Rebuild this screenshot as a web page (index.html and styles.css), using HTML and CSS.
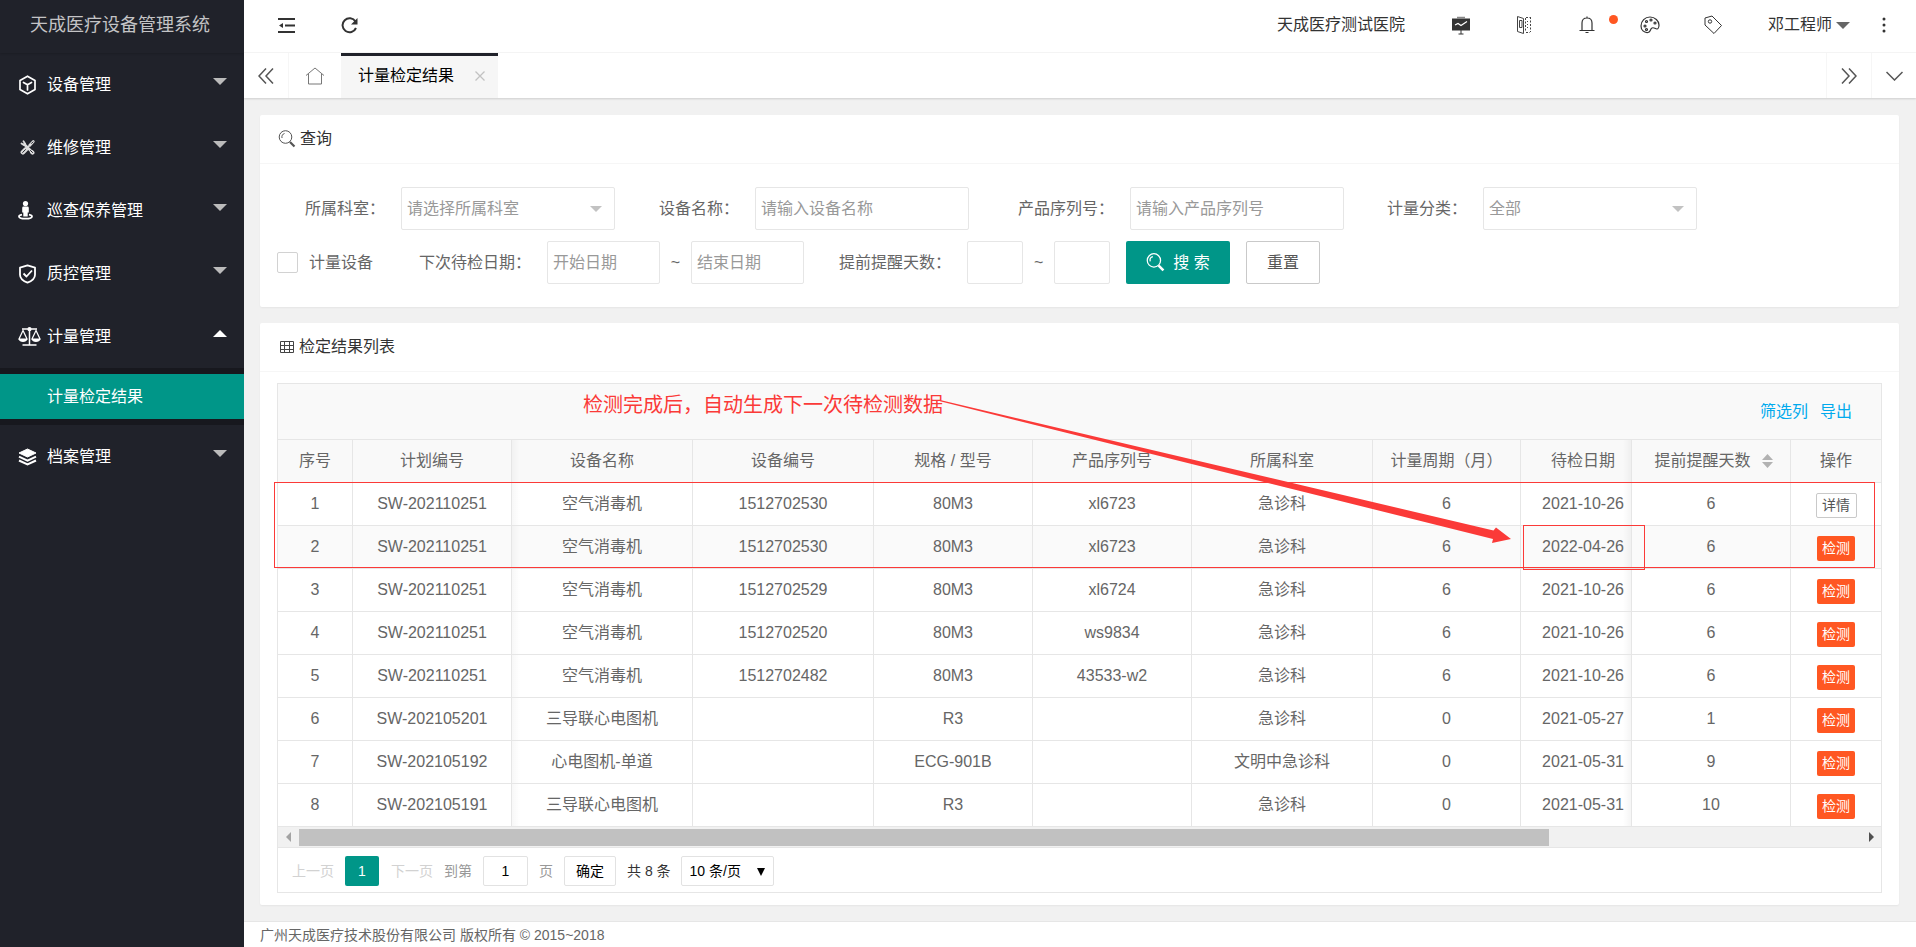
FILE: index.html
```html
<!DOCTYPE html>
<html lang="zh-CN">
<head>
<meta charset="utf-8">
<title>天成医疗设备管理系统</title>
<link rel="stylesheet" href="styles.css">
</head>
<body>
<div class="app">
  <aside class="side">
    <div class="logo">天成医疗设备管理系统</div>
    <nav class="menu">
      <a class="menu-item" href="#"><span class="menu-icon"><svg width="19" height="20" viewBox="0 0 19 20" fill="none" stroke="currentColor" stroke-width="1.700" stroke-linejoin="round"><path d="M9.500 1.200 17 5.500v9L9.500 18.800 2 14.500v-9z"/><path d="M5.500 7.500l4 2.300 4-2.300M9.500 9.800V15" stroke-linecap="round"/></svg></span>设备管理<i class="caret"></i></a>
      <a class="menu-item" href="#"><span class="menu-icon indent"><svg width="15" height="15" viewBox="0 0 15 15" fill="none" stroke="#ddd" stroke-linecap="round"><path d="M4.500 4.500l8 8" stroke-width="2.600"/><path d="M1.500 3.500l2 1.300 1.500-1.300L3.500 1.300" stroke-width="1.800"/><path d="M13.200 1.600L9.800 5.200" stroke-width="2.800"/><path d="M5.800 9.400L2.800 12.300" stroke-width="4.500"/><path d="M9 6L7 8" stroke-width="1.500"/><path d="M12 12.200l.5.500" stroke-width="4"/><path d="M2.600 12.500l2.800-2.800M10.500 10.500l2 2M11.500 3.400l1.500-1.500" stroke="#20222a" stroke-width="1"/></svg></span>维修管理<i class="caret"></i></a>
      <a class="menu-item" href="#"><span class="menu-icon"><svg width="16" height="19" viewBox="0 0 16 19" fill="currentColor"><circle cx="7.500" cy="2.600" r="2.600"/><path d="M5.600 5.600h3.800q1.400 0 1.400 1.400v4.600H9.700v4H5.300v-4H4.200V7q0-1.400 1.400-1.400z"/><path d="M4 13.700c-2 .4-3 1-3 1.800 0 1.300 3 2.200 6.500 2.200s6.500-.9 6.500-2.200c0-.8-1-1.400-3-1.800" fill="none" stroke="currentColor" stroke-width="1.800"/></svg></span>巡查保养管理<i class="caret"></i></a>
      <a class="menu-item" href="#"><span class="menu-icon"><svg width="19" height="20" viewBox="0 0 19 20" fill="none" stroke="currentColor" stroke-width="1.800" stroke-linejoin="round"><path d="M9.500 1.300 17 3.700v7c0 4-4 6.600-7.500 8C6 17.300 2 14.700 2 10.700v-7z"/><path d="M5.500 9.500l3 3 5.500-6"/></svg></span>质控管理<i class="caret"></i></a>
      <a class="menu-item open" href="#"><span class="menu-icon"><svg width="23" height="20" viewBox="0 0 23 20" fill="none" stroke="currentColor" stroke-width="1.200"><path d="M4 2h15M11.500 2v16M4.500 18h14" stroke-width="1.500"/><circle cx="11.500" cy="2.200" r="1.500" fill="currentColor"/><path d="M5 3.500L1 12h8zM18 3.500L14 12h8z"/><path d="M.6 12h8.800c-.4 4-8.400 4-8.800 0zM13.600 12h8.800c-.4 4-8.400 4-8.800 0z" fill="currentColor" stroke="none"/></svg></span>计量管理<i class="caret"></i></a>
      <div class="submenu"><a class="submenu-item" href="#">计量检定结果</a></div>
      <a class="menu-item" href="#"><span class="menu-icon"><svg width="19" height="18" viewBox="0 0 19 18" fill="none" stroke="currentColor" stroke-width="2"><path d="M9.500 1 18 5 9.500 9 1 5z" fill="currentColor" stroke-width="1"/><path d="M1 8.700l8.500 4 8.500-4M1 12.500l8.500 4 8.500-4"/></svg></span>档案管理<i class="caret"></i></a>
    </nav>
  </aside>

  <div class="page">
    <header class="top">
      <button class="tool-btn" type="button" aria-label="收起菜单"><svg width="17" height="17" viewBox="0 0 17 17" fill="none" stroke="#333" stroke-width="2"><path d="M0 2h17M7 8.500h10M0 15h17"/><path d="M5 6v5L1 8.500z" fill="#333" stroke="none"/></svg></button>
      <button class="tool-btn" type="button" aria-label="刷新"><svg width="17" height="17" viewBox="0 0 17 17" fill="none" stroke="#333" stroke-width="2"><path d="M14.500 4.500A7 7 0 1 0 15 11"/><path d="M16.500 1v6.500H10z" fill="#333" stroke="none"/></svg></button>
      <span class="hospital">天成医疗测试医院</span>
      <div class="top-icons">
        <a class="top-icon" href="#" aria-label="大屏"><svg width="20" height="20" viewBox="0 0 20 20" fill="none" stroke="#333"><path d="M6 2.500h8" stroke="#888" stroke-width="1.500"/><path d="M1 3.500h18v12H1z" fill="#333" stroke="none"/><path d="M4 10l3-1.500 3 2 6-4" stroke="#fff" stroke-width="1.200"/><path d="M10 15v4M7.500 19h5"/></svg></a>
        <a class="top-icon" href="#" aria-label="手册"><svg width="16" height="20" viewBox="0 0 16 20" fill="none" stroke="#444"><path d="M1.500 1.500l6 2v15l-6-2z"/><path d="M3.500 5.500h2.500v7h-2.500z"/><path d="M9.500 3v14M14.500 2v15M10 2.500h4M10 17.500h4" stroke-dasharray="2 1.500"/><path d="M11.500 6v8" stroke-dasharray="1 2"/></svg></a>
        <a class="top-icon" href="#" aria-label="消息"><svg width="16" height="18" viewBox="0 0 16 18" fill="none" stroke="#333" stroke-width="1.200"><path d="M3 14V7c0-3 2-5 5-5s5 2 5 5v7M.5 14.500h15M6.500 16.500h3M8 .5v1.500"/></svg><i class="dot"></i></a>
        <a class="top-icon" href="#" aria-label="主题"><svg width="20" height="18" viewBox="0 0 20 18" fill="none" stroke="#333" stroke-width="1.200"><path d="M8 16.500C4 17 1 14 1 10c0-5 4-9 9-9s9 4 9 8c0 2-1 4-2 4-2 0-3-2-5-1s-1 4-4 4.500z"/><circle cx="5" cy="10" r="1"/><circle cx="6.500" cy="5.500" r="1"/><circle cx="11" cy="4" r="1"/><circle cx="15" cy="7" r="1"/><circle cx="6.500" cy="13.500" r="1"/></svg></a>
        <a class="top-icon" href="#" aria-label="便签"><svg width="20" height="20" viewBox="0 0 20 20" fill="none" stroke="#333" stroke-linejoin="round"><path d="M2 3l7-2 9.500 9.500-7.500 8L2 10z"/><circle cx="7" cy="6.500" r="1.700"/></svg></a>
      </div>
      <a class="user" href="#">邓工程师<i class="caret dark"></i></a>
      <button class="more" type="button" aria-label="更多"><svg width="4" height="16" viewBox="0 0 4 16" fill="#333"><circle cx="2" cy="2" r="1.500"/><circle cx="2" cy="8" r="1.500"/><circle cx="2" cy="14" r="1.500"/></svg></button>
    </header>

    <div class="tabs">
      <button class="tab-ctl left" type="button" aria-label="向左"><svg width="16" height="16" viewBox="0 0 16 16" fill="none" stroke="#555" stroke-width="1.500"><path d="M8 .5L1 8l7 7.500M15 .5L8 8l7 7.500"/></svg></button>
      <a class="tab-home" href="#" aria-label="主页"><svg width="20" height="18" viewBox="0 0 20 18" fill="none" stroke="#777"><path d="M1 8.500L10 1l9 7.500M3.500 7v10h13V7"/></svg></a>
      <div class="tab active"><a href="#">计量检定结果</a><button class="tab-close" type="button" aria-label="关闭"><svg width="10" height="10" viewBox="0 0 10 10" stroke="#c2c2c2" stroke-width="1.300"><path d="M.5.5l9 9M9.500.5l-9 9"/></svg></button></div>
      <button class="tab-ctl push" type="button" aria-label="向右"><svg width="16" height="16" viewBox="0 0 16 16" fill="none" stroke="#555" stroke-width="1.500"><path d="M1 .5L8 8l-7 7.500M8 .5L15 8l-7 7.500"/></svg></button>
      <button class="tab-ctl" type="button" aria-label="展开"><svg width="17" height="10" viewBox="0 0 17 10" fill="none" stroke="#555" stroke-width="1.500"><path d="M.5 1l8 8 8-8"/></svg></button>
    </div>

    <main class="content">
      <section class="card">
        <h2 class="card-head"><svg width="18" height="18" viewBox="0 0 18 18" fill="none" stroke="#555"><circle cx="7.500" cy="7" r="6.300"/><path d="M4 8c-.5-2 .5-4 2.500-4.500"/><path d="M12 12l4.500 4.500" stroke-width="2.200"/></svg>查询</h2>
        <form class="search">
          <div class="row-a">
            <div class="field"><label for="dept">所属科室：</label><span class="pick"><select id="dept" class="ctl"><option>请选择所属科室</option></select></span></div>
            <div class="field"><label for="name">设备名称：</label><input id="name" class="ctl wide" type="text" placeholder="请输入设备名称"></div>
            <div class="field"><label for="sn">产品序列号：</label><input id="sn" class="ctl wide" type="text" placeholder="请输入产品序列号"></div>
            <div class="field"><label for="kind">计量分类：</label><span class="pick"><select id="kind" class="ctl"><option>全部</option></select></span></div>
          </div>
          <div class="row-b">
            <label class="check"><input type="checkbox">计量设备</label>
            <div class="field"><label for="from">下次待检日期：</label><input id="from" class="ctl date" type="text" placeholder="开始日期"><span class="tilde">~</span><input class="ctl date" type="text" placeholder="结束日期" aria-label="结束日期"></div>
            <div class="field"><label for="days">提前提醒天数：</label><input id="days" class="ctl num" type="text"><span class="tilde">~</span><input class="ctl num" type="text" aria-label="最多天数"></div>
            <div class="actions">
              <button class="btn primary" type="button"><svg width="19" height="19" viewBox="0 0 18 18" fill="none" stroke="#fff" stroke-width="1.200"><circle cx="7.500" cy="7" r="6.300"/><path d="M4 8c-.5-2 .5-4 2.500-4.500"/><path d="M12 12l4.500 4.500" stroke-width="2.400"/></svg>搜 索</button>
              <button class="btn plain" type="reset">重置</button>
            </div>
          </div>
        </form>
      </section>

      <section class="card">
        <h2 class="card-head"><svg class="grid-icon" width="14" height="12" viewBox="0 0 14 12" fill="none" stroke="#444"><path d="M.5.500h13v11H.5zM.5 4.500h13M.5 8.500h13M4.500 .5v11M9.500.5v11"/></svg>检定结果列表</h2>
        <div class="list">
          <div class="list-tools"><a href="#">筛选列</a><a href="#">导出</a></div>
          <table class="grid">
            <colgroup><col class="w75"><col class="w159"><col class="w181"><col class="w181"><col class="w159"><col class="w159"><col class="w181"><col class="w148"><col class="w111"><col class="w159"><col class="w90"></colgroup>
            <thead><tr><th>序号</th><th>计划编号</th><th>设备名称</th><th>设备编号</th><th>规格 / 型号</th><th>产品序列号</th><th>所属科室</th><th>计量周期（月）</th><th>待检日期</th><th><span class="sortable">提前提醒天数<svg width="11" height="14" viewBox="0 0 11 14" fill="#b2b2b2"><path d="M0 6L5.500 0 11 6zM0 8h11l-5.500 6z"/></svg></span></th><th>操作</th></tr></thead>
            <tbody>
              <tr><td>1</td><td>SW-202110251</td><td>空气消毒机</td><td>1512702530</td><td>80M3</td><td>xl6723</td><td>急诊科</td><td>6</td><td>2021-10-26</td><td>6</td><td><button class="mini line" type="button">详情</button></td></tr>
              <tr class="hover"><td>2</td><td>SW-202110251</td><td>空气消毒机</td><td>1512702530</td><td>80M3</td><td>xl6723</td><td>急诊科</td><td>6</td><td>2022-04-26</td><td>6</td><td><button class="mini" type="button">检测</button></td></tr>
              <tr><td>3</td><td>SW-202110251</td><td>空气消毒机</td><td>1512702529</td><td>80M3</td><td>xl6724</td><td>急诊科</td><td>6</td><td>2021-10-26</td><td>6</td><td><button class="mini" type="button">检测</button></td></tr>
              <tr><td>4</td><td>SW-202110251</td><td>空气消毒机</td><td>1512702520</td><td>80M3</td><td>ws9834</td><td>急诊科</td><td>6</td><td>2021-10-26</td><td>6</td><td><button class="mini" type="button">检测</button></td></tr>
              <tr><td>5</td><td>SW-202110251</td><td>空气消毒机</td><td>1512702482</td><td>80M3</td><td>43533-w2</td><td>急诊科</td><td>6</td><td>2021-10-26</td><td>6</td><td><button class="mini" type="button">检测</button></td></tr>
              <tr><td>6</td><td>SW-202105201</td><td>三导联心电图机</td><td></td><td>R3</td><td></td><td>急诊科</td><td>0</td><td>2021-05-27</td><td>1</td><td><button class="mini" type="button">检测</button></td></tr>
              <tr><td>7</td><td>SW-202105192</td><td>心电图机-单道</td><td></td><td>ECG-901B</td><td></td><td>文明中急诊科</td><td>0</td><td>2021-05-31</td><td>9</td><td><button class="mini" type="button">检测</button></td></tr>
              <tr><td>8</td><td>SW-202105191</td><td>三导联心电图机</td><td></td><td>R3</td><td></td><td>急诊科</td><td>0</td><td>2021-05-31</td><td>10</td><td><button class="mini" type="button">检测</button></td></tr>
            </tbody>
          </table>
          <div class="scroll"><i class="arrow prev"></i><div class="track"><div class="thumb"></div></div><i class="arrow next"></i></div>
          <div class="pager">
            <span class="off">上一页</span><span class="now">1</span><span class="off next-page">下一页</span>
            <label class="jump">到第<input class="box" type="text" value="1">页</label>
            <button class="box ok" type="button">确定</button>
            <span class="total">共 8 条</span>
            <span class="size"><select class="box" aria-label="每页条数"><option>10 条/页</option></select></span>
          </div>
          <div class="notes">
            <p class="note-text">检测完成后，自动生成下一次待检测数据</p>
            <svg class="note-arrow" width="580" height="150" viewBox="0 0 580 150" fill="#fb3a38"><path d="M0 0 553.500 130.500 556 127.500 571 139 552 143 553 139 0 1.300z"/></svg>
            <div class="mark rows"></div>
            <div class="mark cell"></div>
          </div>
        </div>
      </section>
    </main>
    <footer class="foot">广州天成医疗技术股份有限公司 版权所有 © 2015~2018</footer>
  </div>
</div>
</body>
</html>
```

FILE: styles.css
```css
* { box-sizing: border-box; }
body { margin: 0; font: 16px/24px "Liberation Sans", "Noto Sans CJK SC", sans-serif; color: #666; background: #f1f1f1; }
a { color: inherit; text-decoration: none; }
button, input, select { font: inherit; color: inherit; margin: 0; }
button { border: 0; padding: 0; background: none; cursor: pointer; }
svg { display: block; flex: none; }

.app { display: flex; min-height: 100vh; }
.side { flex: none; width: 244px; background: #20222a; color: #fff; }
.logo { height: 53px; padding-right: 4px; line-height: 51px; font-size: 18px; text-align: center; color: #c4c4c6; box-shadow: 0 1px 2px rgba(0, 0, 0, .15); }
.menu-item { display: flex; align-items: center; height: 63px; padding: 0 17px 0 18px; }
.menu-icon { width: 29px; }
.menu-icon.indent { padding-left: 2px; }
.caret { margin: 0 0 6px auto; border: 7px solid transparent; border-bottom-width: 0; border-top-color: #bbb; }
.menu-item.open .caret { border-width: 0 7px 7px; border-bottom-color: #fff; }
.submenu { padding: 6px 0; background: #17181e; }
.submenu-item { display: block; padding-left: 47px; line-height: 45px; background: #009688; }

.page { flex: 1; min-width: 0; display: flex; flex-direction: column; }
.top { display: flex; align-items: center; height: 53px; padding: 0 30px 2px 34px; background: #fff; border-bottom: 1px solid #f6f6f6; color: #333; }
.tool-btn { margin-right: 46px; }
.hospital { margin-left: auto; }
.top-icons { display: flex; margin: 0 23px 0 25px; }
.top-icon { position: relative; display: flex; align-items: center; justify-content: center; width: 63px; height: 50px; }
.dot { position: absolute; top: 15px; right: 1px; width: 9px; height: 9px; border-radius: 50%; background: #ff5722; }
.user { display: flex; align-items: center; gap: 4px; margin-right: 32px; }
.caret.dark { margin: 0; border-top-color: #666; }

.tabs { position: relative; display: flex; height: 45px; background: #fff; box-shadow: 0 1px 2px rgba(0, 0, 0, .15); }
.tab-ctl { display: flex; align-items: center; justify-content: center; width: 45px; border-left: 1px solid #f6f6f6; }
.tab-ctl.left { border-left: 0; border-right: 1px solid #f6f6f6; }
.tab-ctl.push { margin-left: auto; }
.tab-home { display: flex; align-items: center; justify-content: center; width: 52px; }
.tab { display: flex; align-items: center; gap: 17px; padding: 0 9px 2px 17px; background: #f6f6f6; border-top: 3px solid #20222a; color: #000; }
.tab-close { padding: 4px; }

.content { flex: 1; display: flex; flex-direction: column; gap: 16px; padding: 17px 17px 16px 16px; }
.card { background: #fff; border-radius: 2px; box-shadow: 0 1px 2px rgba(0, 0, 0, .05); }
.card-head { display: flex; align-items: center; gap: 4px; height: 49px; margin: 0; padding: 0 18px 1px; border-bottom: 1px solid #f6f6f6; font-size: 16px; font-weight: inherit; color: #333; }
.grid-icon { margin: 0 1px 0 2px; }

.search { padding: 23px 17px; display: flex; flex-direction: column; gap: 11px; }
.row-a { display: grid; grid-template-columns: 354px 359px 369px 310px; padding-left: 28px; }
.row-b { display: flex; }
.field { display: flex; align-items: center; }
.field label { padding-right: 16px; }
.ctl { height: 43px; padding: 0 5px; border: 1px solid #e6e6e6; border-radius: 2px; background: #fff; color: #666; outline: 0; }
.ctl::placeholder { color: #999; opacity: 1; }
.wide, .pick { width: 214px; }
.pick { position: relative; }
.pick .ctl { display: block; width: 100%; appearance: none; color: #999; }
.pick::after { content: ""; position: absolute; top: 19px; right: 13px; border: 6px solid transparent; border-bottom-width: 0; border-top-color: #c2c2c2; pointer-events: none; }
.check { display: flex; align-items: center; gap: 11px; margin-right: 46px; }
.check input { appearance: none; width: 21px; height: 21px; border: 1px solid #d2d2d2; border-radius: 2px; }
.date { width: 113px; }
.num { width: 56px; }
.tilde { width: 31px; text-align: center; }
.row-b .field + .field { margin-left: 35px; }
.actions { display: flex; gap: 16px; margin-left: 16px; }
.btn { display: flex; align-items: center; justify-content: center; gap: 8px; height: 43px; border-radius: 2px; }
.primary { width: 104px; background: #009688; color: #fff; }
.plain { width: 74px; border: 1px solid #c9c9c9; color: #555; }

.list { position: relative; margin: 11px 17px 0; border: 1px solid #e6e6e6; }
.card:last-child { padding-bottom: 12px; }
.list-tools { display: flex; justify-content: flex-end; align-items: center; gap: 12px; height: 56px; padding-right: 29px; background: #f9f9f9; border-bottom: 1px solid #e6e6e6; color: #01aaed; }
.grid { width: 100%; table-layout: fixed; border-collapse: separate; border-spacing: 0; }
.grid th, .grid td { height: 43px; padding: 0; border: solid #e6e6e6; border-width: 0 1px 1px 0; font-weight: inherit; text-align: center; white-space: nowrap; }
.grid th { background-color: #f9f9f9; }
.grid tr > :last-child { border-right: 0; }
.grid tr > :nth-child(3) { background-image: linear-gradient(to right, rgba(0, 0, 0, .03), transparent 8px); }
.grid tr > :nth-child(9) { padding-left: 14px; background-image: linear-gradient(to left, rgba(0, 0, 0, .04), transparent 8px); }
.hover td { background-color: #fafafa; }
.w75 { width: 75px; }
.w90 { width: 90px; }
.w111 { width: 111px; }
.w148 { width: 148px; }
.w159 { width: 159px; }
.w181 { width: 181px; }
.sortable { display: inline-flex; align-items: center; gap: 11px; padding-left: 5px; }
.mini { display: block; width: 38px; height: 25px; margin: 3px auto 0; border-radius: 2px; background: #ff5722; color: #fff; font-size: 14px; line-height: 23px; }
.mini.line { width: 41px; border: 1px solid #c9c9c9; background: #fff; color: #555; }

.scroll { display: flex; align-items: center; height: 21px; background: #f1f1f1; border-bottom: 1px solid #e6e6e6; }
.arrow { width: 20px; display: flex; justify-content: center; }
.arrow.prev { width: 21px; }
.arrow::before { content: ""; border: 5px solid transparent; }
.prev::before { border-left-width: 0; border-right-color: #a3a3a3; }
.next::before { border-right-width: 0; border-left-color: #505050; }
.track { flex: 1; }
.thumb { width: 80%; height: 17px; background: #c1c1c1; }

.pager { display: flex; align-items: center; height: 44px; padding: 2px 0 0 14px; font-size: 14px; color: #999; }
.off { color: #d2d2d2; }
.now { width: 34px; height: 30px; margin: 0 12px 0 11px; border-radius: 2px; background: #009688; color: #fff; line-height: 30px; text-align: center; }
.next-page { margin-right: 11px; }
.box { height: 30px; border: 1px solid #e2e2e2; border-radius: 2px; background: #fff; color: #000; }
.jump input { width: 45px; margin: 0 11px; padding: 0; text-align: center; }
.ok { width: 52px; margin: 0 11px; }
.total { color: #333; margin-right: 10px; }
.size { position: relative; }
.size .box { width: 93px; padding: 0 8px; appearance: none; }
.size::after { content: ""; position: absolute; top: 12px; right: 9px; border: solid transparent; border-width: 8px 4px 0; border-top-color: #000; pointer-events: none; }

.notes { position: absolute; top: 0; left: 0; pointer-events: none; color: #fb3a38; }
.note-text { position: absolute; top: 6px; left: 305px; margin: 0; font-size: 20px; line-height: 30px; white-space: nowrap; }
.note-arrow { position: absolute; top: 16px; left: 662px; }
.mark { position: absolute; border: 1px solid #fb3a38; }
.mark.rows { top: 98px; left: -4px; width: 1601px; height: 86px; }
.mark.cell { top: 141px; left: 1245px; width: 122px; height: 45px; }

.foot { height: 26px; padding-left: 16px; border-top: 1px solid #e6e6e6; background: #fff; font-size: 14px; line-height: 26px; }
```
